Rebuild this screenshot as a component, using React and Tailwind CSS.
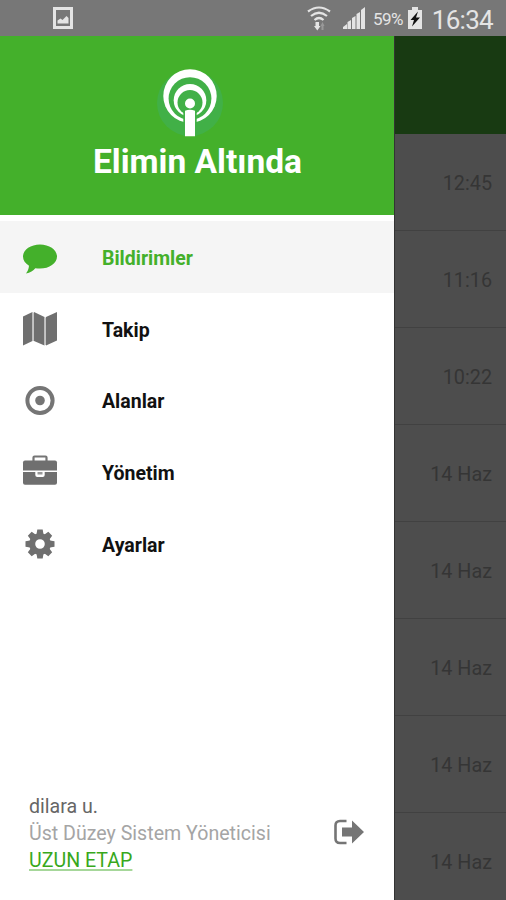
const menu = [
  { icon: BubbleIcon, label: 'Bildirimler', active: true },
  { icon: MapIcon, label: 'Takip' },
  { icon: TargetIcon, label: 'Alanlar' },
  { icon: BriefcaseIcon, label: 'Yönetim' },
  { icon: GearIcon, label: 'Ayarlar' },
]

const times = ['12:45', '11:16', '10:22', '14 Haz', '14 Haz', '14 Haz', '14 Haz', '14 Haz']

function BubbleIcon() {
  return (
    <svg viewBox="0 0 36 36" className="h-9 w-9" fill="#44b02b">
      <path d="M18 5.500C8.600 5.500 1 10.800 1 17.500c0 3.800 2.300 7 6 9.200-.3 3.300-1.300 5.500-3 7.800 4.300-.9 7.300-2.600 9.300-5.300 1.500.3 3.100.4 4.700.4 9.400 0 17-5.400 17-12.100S27.400 5.500 18 5.500z" />
    </svg>
  )
}

function MapIcon() {
  return (
    <svg viewBox="0 0 36 36" className="h-9 w-9" fill="#6f6f6f">
      <path d="M1 5.500 10.500 1v29L1 34.500z" />
      <path d="M12 1 22.500 6v28.500L12 30z" />
      <path d="M24 6 35 1v28.500l-11 5z" />
      <path d="M10.500 1.500h1.500v28.500h-1.500zM22.500 6.500H24V34h-1.500z" fill="#c4c4c4" />
    </svg>
  )
}

function TargetIcon() {
  return (
    <svg viewBox="0 0 36 36" className="h-9 w-9">
      <circle cx="18" cy="18.500" r="12.600" fill="none" stroke="#757575" strokeWidth="4" />
      <circle cx="18" cy="18.500" r="4.800" fill="#757575" />
    </svg>
  )
}

function BriefcaseIcon() {
  return (
    <svg viewBox="0 0 36 36" className="h-9 w-9" fill="#6f6f6f">
      <path d="M11.500 7V3.500q0-1 1-1h11q1 0 1 1V7" fill="none" stroke="#757575" strokeWidth="2.200" />
      <path d="M3 6.500h30q2 0 2 2v8H1v-8q0-2 2-2z" />
      <path d="M1 18h12.300v3q0 2 2 2h5.400q2 0 2-2v-3H35v10.700q0 2-2 2H3q-2 0-2-2z" />
      <path d="M15.500 18h5v2.500h-5z" fill="#999" />
    </svg>
  )
}

function GearIcon() {
  return (
    <svg viewBox="0 0 36 36" className="h-9 w-9" fill="#6f6f6f">
      {[0, 45, 90, 135].map((angle) => (
        <path key={angle} d="M15.300 3.500h5.400l1 6h-7.400zM15.300 32.500h5.400l1-6h-7.400z" transform={`rotate(${angle} 18 18)`} />
      ))}
      <circle cx="18" cy="18" r="7.800" fill="none" stroke="#6f6f6f" strokeWidth="6" />
    </svg>
  )
}

function Logo() {
  return (
    <svg viewBox="0 0 68 70" className="h-[70px] w-[68px]">
      <circle cx="34" cy="36" r="33" fill="#41b047" />
      <circle cx="34" cy="29" r="26.700" fill="#fff" />
      <circle cx="34" cy="31.600" r="21.400" fill="#41b047" />
      <circle cx="34" cy="33.300" r="16.300" fill="#fff" />
      <circle cx="34" cy="35.500" r="12.500" fill="#41b047" />
      <path d="M27.300 42h13.400v27H27.300z" fill="#41b047" />
      <circle cx="34" cy="36.500" r="5" fill="#fff" />
      <path d="M29 43.700q5-2 10 0v25.500H29z" fill="#fff" />
    </svg>
  )
}

function StatusBar() {
  return (
    <header className="flex h-9 shrink-0 items-center bg-[#777] pr-[13px] pl-[53px] text-[#e4e4e4]">
      <svg viewBox="0 0 20 22" className="h-[22px] w-5">
        <path d="M1.500 1.500h17v19h-17z" fill="none" stroke="#e4e4e4" strokeWidth="3" />
        <path d="M4.500 16.500v-3l3-2 2 1.500 4-4 2 2v5.500z" fill="#e4e4e4" />
      </svg>
      <svg viewBox="0 0 24 27" className="ml-auto h-[27px] w-6">
        <g fill="none" stroke="#e4e4e4" strokeWidth="2.200">
          <path d="M1 6.500q11-8 22 0" />
          <path d="M4 11q8-6.500 16 0" />
          <path d="M7.500 15q4.500-4 9 0" />
        </g>
        <path d="M8.500 17h3.500v4h1.500l-3.200 4.500L7 21h1.500z" fill="#e4e4e4" />
        <path d="M14.500 25v-4h-1l2-4 2 4h-1v4z" fill="#999" />
      </svg>
      <svg viewBox="0 0 24 24" className="ml-[11px] h-6 w-6" fill="#e4e4e4">
        <path d="M1 23v-2l4-3v5zM5.500 23v-7L9 14v9zM10 23V12l3.500-2v13zM14.500 23V8L18 6v17zM19 23V4l4-3v22z" />
      </svg>
      <span className="ml-[7px] pt-[2px] font-[Roboto,sans-serif] text-[17px] leading-9 tracking-[-0.6px]">59%</span>
      <svg viewBox="0 0 16 24" className="ml-[4px] h-6 w-4">
        <path d="M1 4h4V1h6v3h4v19H1z" fill="#e4e4e4" />
        <path d="M11 5.500 3.500 14H7l-2 6.500L13 11.500H9z" fill="#111" />
      </svg>
      <span className="ml-[9px] pt-[3px] font-[Roboto,sans-serif] text-[26px] leading-9 tracking-[-0.7px]">16:34</span>
    </header>
  )
}

function Drawer() {
  return (
    <aside className="flex w-[394px] shrink-0 flex-col bg-white">
      <div className="flex h-[179px] flex-col items-center bg-[#44b02b] pt-[31px] pr-[14px]">
        <Logo />
        <h1 className="mt-[5px] ml-[15px] text-[33.500px] leading-[40px] font-bold whitespace-nowrap text-white">
          Elimin Altında
        </h1>
      </div>
      <nav className="pt-[6px]">
        {menu.map((item) => (
          <a
            key={item.label}
            className={`flex h-[71.800px] items-center pl-[22px] text-[19.500px] font-bold ${
              item.active ? 'bg-[#f5f5f5] text-[#44b02b]' : 'text-[#111]'
            }`}
          >
            <item.icon />
            <span className="ml-11 pt-[3px]">{item.label}</span>
          </a>
        ))}
      </nav>
      <footer className="mt-auto flex items-center justify-between pr-[29px] pb-[26px] pl-[29px]">
        <div className="text-[19.600px] leading-[27px]">
          <p className="text-[#666]">dilara u.</p>
          <p className="text-[#a5a5a5]">Üst Düzey Sistem Yöneticisi</p>
          <p className="text-[#38a81c] underline decoration-[#a6d79a] decoration-2 underline-offset-2">UZUN ETAP</p>
        </div>
        <svg viewBox="0 0 32 28" className="mb-[3px] h-7 w-8">
          <path d="M13.500 3H7Q2.500 3 2.500 7.500v13Q2.500 25 7 25h6.500" fill="none" stroke="#757575" strokeWidth="2.600" />
          <path d="M9 9.500h10V2.500L31 14 19 25.500v-7H9z" fill="#757575" />
        </svg>
      </footer>
    </aside>
  )
}

export default function App() {
  return (
    <div className="flex h-[900px] w-[506px] flex-col overflow-hidden font-[Roboto,sans-serif]">
      <StatusBar />
      <div className="flex min-h-0 flex-1">
        <Drawer />
        <main className="flex-1 overflow-hidden border-l border-[#333] bg-[#4d4d4d]">
          <div className="h-[98px] bg-[#183a12]" />
          {times.map((time, i) => (
            <div
              key={i}
              className="flex h-[97px] items-center justify-end border-b border-[#414141] pt-[3px] pr-[14px] text-[19.800px] text-[#353535]"
            >
              {time}
            </div>
          ))}
        </main>
      </div>
    </div>
  )
}
